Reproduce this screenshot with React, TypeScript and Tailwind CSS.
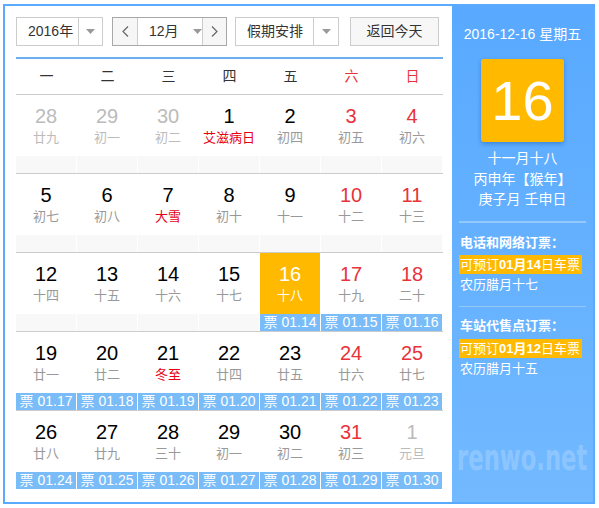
import React from "react";

type Day = {
  n: number;
  lunar: string;
  kind?: "other" | "weekend" | "today";
  fest?: boolean;
  ticket?: string;
};

const FONT = { fontFamily: '"Liberation Sans", Arial, "Noto Sans CJK SC", sans-serif' };

const WEEK = ["一", "二", "三", "四", "五", "六", "日"];

const ROWS: Day[][] = [
  [
    { n: 28, lunar: "廿九", kind: "other" },
    { n: 29, lunar: "初一", kind: "other" },
    { n: 30, lunar: "初二", kind: "other" },
    { n: 1, lunar: "艾滋病日", fest: true },
    { n: 2, lunar: "初四" },
    { n: 3, lunar: "初五", kind: "weekend" },
    { n: 4, lunar: "初六", kind: "weekend" }
  ],
  [
    { n: 5, lunar: "初七" },
    { n: 6, lunar: "初八" },
    { n: 7, lunar: "大雪", fest: true },
    { n: 8, lunar: "初十" },
    { n: 9, lunar: "十一" },
    { n: 10, lunar: "十二", kind: "weekend" },
    { n: 11, lunar: "十三", kind: "weekend" }
  ],
  [
    { n: 12, lunar: "十四" },
    { n: 13, lunar: "十五" },
    { n: 14, lunar: "十六" },
    { n: 15, lunar: "十七" },
    { n: 16, lunar: "十八", kind: "today", ticket: "01.14" },
    { n: 17, lunar: "十九", kind: "weekend", ticket: "01.15" },
    { n: 18, lunar: "二十", kind: "weekend", ticket: "01.16" }
  ],
  [
    { n: 19, lunar: "廿一", ticket: "01.17" },
    { n: 20, lunar: "廿二", ticket: "01.18" },
    { n: 21, lunar: "冬至", fest: true, ticket: "01.19" },
    { n: 22, lunar: "廿四", ticket: "01.20" },
    { n: 23, lunar: "廿五", ticket: "01.21" },
    { n: 24, lunar: "廿六", kind: "weekend", ticket: "01.22" },
    { n: 25, lunar: "廿七", kind: "weekend", ticket: "01.23" }
  ],
  [
    { n: 26, lunar: "廿八", ticket: "01.24" },
    { n: 27, lunar: "廿九", ticket: "01.25" },
    { n: 28, lunar: "三十", ticket: "01.26" },
    { n: 29, lunar: "初一", ticket: "01.27" },
    { n: 30, lunar: "初二", ticket: "01.28" },
    { n: 31, lunar: "初三", kind: "weekend", ticket: "01.29" },
    { n: 1, lunar: "元旦", kind: "other", ticket: "01.30" }
  ]
];

function Caret() {
  return (
    <svg width="9" height="5" viewBox="0 0 9 5">
      <path d="M0 0 L9 0 L4.5 5 Z" fill="#9a9a9a" />
    </svg>
  );
}

function Chevron({ dir }: { dir: "left" | "right" }) {
  return (
    <svg width="7" height="11" viewBox="0 0 7 11">
      <path
        d={dir === "left" ? "M6 0.5 L1 5.5 L6 10.5" : "M1 0.5 L6 5.5 L1 10.5"}
        fill="none"
        stroke="#666"
        strokeWidth="1.2"
      />
    </svg>
  );
}

function DayCell({ day }: { day: Day }) {
  const today = day.kind === "today";
  const numColor = today
    ? "text-white"
    : day.kind === "other"
    ? "text-[#bbbbbb]"
    : day.kind === "weekend"
    ? "text-[#e8333a]"
    : "text-black";
  const lunarColor = today
    ? "text-white"
    : day.fest
    ? "text-[#e60012]"
    : day.kind === "other"
    ? "text-[#bbbbbb]"
    : "text-[#999999]";

  return (
    <div className="flex h-[78px] w-[61px] flex-col">
      <div className={today ? "flex h-[61px] w-[60px] flex-col items-center bg-[#ffba00]" : "flex h-[61px] w-[60px] flex-col items-center"}>
        <span className={`pt-[9px] text-[20px] leading-[24px] ${numColor}`}>{day.n}</span>
        <span className={`mt-[2px] text-[13px] leading-[16px] ${lunarColor}`}>{day.lunar}</span>
      </div>
      {day.ticket ? (
        <div className="h-[17px] w-[60px] bg-[#7abcf8] text-center text-[14px] leading-[17px] text-white">
          票 {day.ticket}
        </div>
      ) : (
        <div className="h-[17px] w-[60px] bg-[#f8f8f8]" />
      )}
    </div>
  );
}

export default function App() {
  return (
    <div className="relative h-[508px] w-[599px] bg-white pl-[3px] pt-[4px]" style={FONT}>
      <div className="flex h-[500px] w-[592px] border-2 border-[#5aabff]">
        <div className="flex w-[447px] shrink-0 flex-col bg-white pl-[11px] pr-[9px] pt-[11px]">
          {/* toolbar */}
          <div className="flex h-[29px] items-stretch text-[14px] text-[#333]">
            <div className="flex w-[87px] border border-[#cccccc]">
              <div className="flex w-[61px] items-center pl-[11px]">2016年</div>
              <div className="flex flex-1 items-center justify-center border-l border-[#cccccc]">
                <Caret />
              </div>
            </div>
            <div className="ml-[9px] flex w-[115px] border border-[#a8a8a8]">
              <div className="flex w-[24px] items-center justify-center bg-[#f6f6f6]">
                <Chevron dir="left" />
              </div>
              <div className="flex w-[66px] items-center border-x border-[#cccccc] pl-[11px]">
                <span>12月</span>
                <span className="ml-[14px] flex">
                  <Caret />
                </span>
              </div>
              <div className="flex flex-1 items-center justify-center bg-[#f6f6f6]">
                <Chevron dir="right" />
              </div>
            </div>
            <div className="ml-[8px] flex w-[104px] border border-[#cccccc]">
              <div className="flex w-[77px] items-center pl-[11px]">假期安排</div>
              <div className="flex flex-1 items-center justify-center border-l border-[#cccccc]">
                <Caret />
              </div>
            </div>
            <div className="ml-[11px] flex w-[89px] items-center justify-center border border-[#cccccc] bg-[#f7f7f7]">
              返回今天
            </div>
          </div>
          <div className="mt-[11px] h-[2px] w-[427px] bg-[#6cb0f0]" />

          {/* week header */}
          <div className="flex h-[36px] w-[427px] border-b border-[#cccccc] text-[14px]">
            {WEEK.map((w, i) => (
              <div
                key={w}
                className={`flex w-[61px] items-center justify-center ${i >= 5 ? "text-[#e8333a]" : "text-[#333]"}`}
              >
                {w}
              </div>
            ))}
          </div>

          {/* day grid */}
          {ROWS.map((row, ri) => (
            <div
              key={ri}
              className={ri < ROWS.length - 1 ? "flex w-[427px] border-b border-[#cccccc]" : "flex w-[427px]"}
            >
              {row.map((d, ci) => (
                <DayCell key={ci} day={d} />
              ))}
            </div>
          ))}
        </div>

        {/* side panel */}
        <div className="flex w-[141px] shrink-0 flex-col overflow-hidden bg-gradient-to-b from-[#58a9ff] to-[#72b9ff] text-white">
          <div className="pt-[18px] text-center text-[14px] leading-[20px]">2016-12-16 星期五</div>
          <div className="mx-auto mt-[15px] flex h-[83px] w-[83px] items-center justify-center rounded-[3px] bg-[#ffba00] text-[56px] leading-none shadow-[0_2px_4px_rgba(0,60,140,0.35)]">
            16
          </div>
          <div className="mt-[6px] text-center text-[14px] leading-[20.5px]">
            <div>十一月十八</div>
            <div>丙申年【猴年】</div>
            <div>庚子月 壬申日</div>
          </div>
          <div className="mx-[7px] mt-[11px] h-[2px] bg-[#94c9fb]" />
          <div className="pl-[7px] text-[13px] leading-[22px]">
            <div className="mt-[9px] pl-[1px] font-bold">电话和网络订票：</div>
            <div className="mt-[1px] leading-[19px]">
              <span className="inline-block bg-[#ffba00] pl-[1px] pr-[2px]">
                可预订<b>01月14</b>日车票
              </span>
            </div>
            <div className="pl-[1px]">农历腊月十七</div>
          </div>
          <div className="mx-[7px] mt-[10px] h-px bg-[#94c9fb]" />
          <div className="pl-[7px] text-[13px] leading-[22px]">
            <div className="mt-[8px] pl-[1px] font-bold">车站代售点订票：</div>
            <div className="mt-[2px] leading-[19px]">
              <span className="inline-block bg-[#ffba00] pl-[1px] pr-[2px]">
                可预订<b>01月12</b>日车票
              </span>
            </div>
            <div className="pl-[1px]">农历腊月十五</div>
          </div>
          <div className="mt-auto mb-[30px] flex justify-center">
            <span
              className="inline-block scale-x-[1.03] scale-y-[1.6] whitespace-nowrap text-[22px] font-bold leading-[26px] text-white opacity-20"
              style={{ fontFamily: '"DejaVu Sans", sans-serif' }}
            >
              renwo.net
            </span>
          </div>
        </div>
      </div>
    </div>
  );
}
